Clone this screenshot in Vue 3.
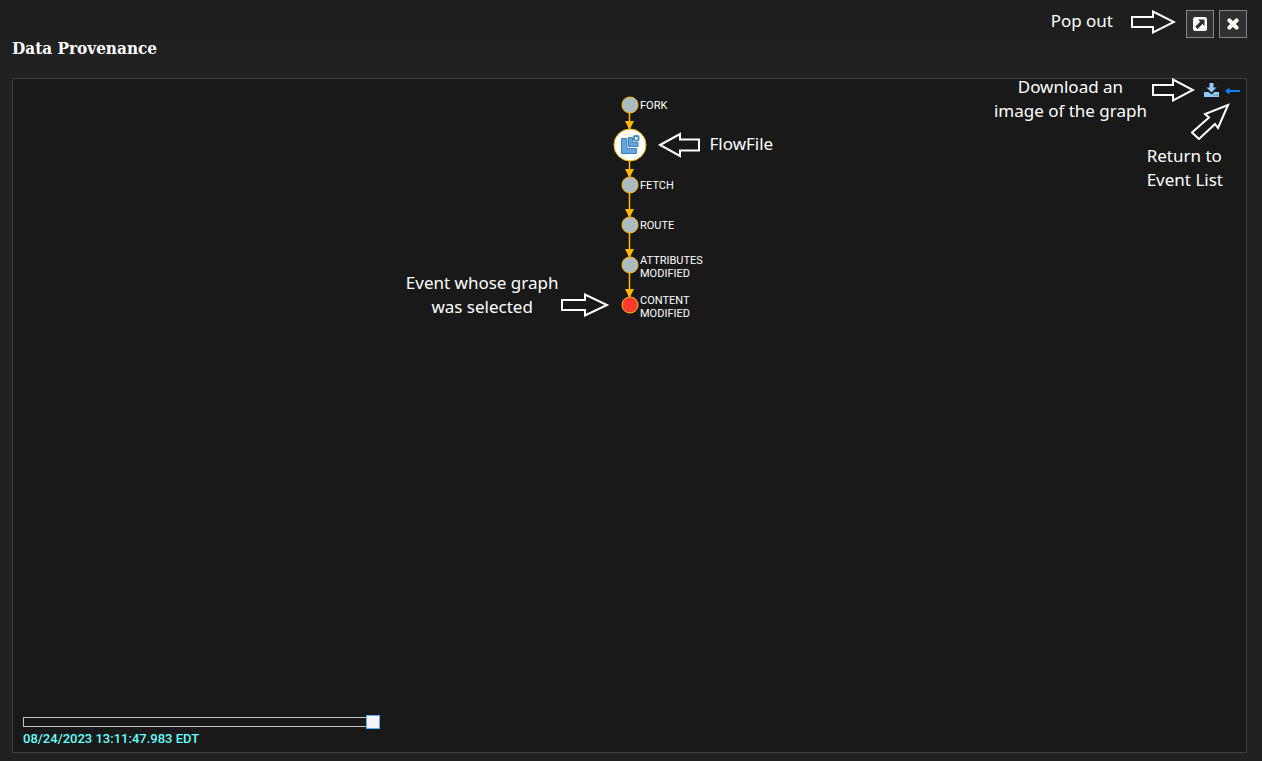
<script setup>
import { ref } from 'vue'

const position = ref(100)

const events = [
  { y: 26, lines: ['FORK'] },
  { y: 66, flowfile: true, lines: [] },
  { y: 106, lines: ['FETCH'] },
  { y: 146, lines: ['ROUTE'] },
  { y: 186, lines: ['ATTRIBUTES', 'MODIFIED'] },
  { y: 226, lines: ['CONTENT', 'MODIFIED'], selected: true }
]

const radius = (e) => (e.flowfile ? 16 : 8)

const links = events.slice(1).map((e, i) => ({
  from: events[i].y + radius(events[i]),
  to: e.y - radius(e)
}))

const baseline = (e, i) => e.y + 4 + (e.lines.length > 1 ? i * 13 - 5 : 0)
</script>

<template>
  <main class="page">
    <header class="topbar">
      <span class="note">Pop out</span>
      <svg class="arrow" width="45" height="24" viewBox="0 0 45 24" aria-hidden="true">
        <path d="M1 7H22V1.500L43 12 22 22.500V17H1Z" />
      </svg>
      <div class="window-buttons">
        <button type="button" class="square" aria-label="Pop out">
          <svg width="14" height="14" viewBox="0 0 14 14">
            <rect width="14" height="14" rx="2.500" fill="#fff" />
            <path d="M5 2.500H11.500V9L9.500 7 4.500 12 2.200 9.700 7.200 4.700Z" fill="#303030" />
          </svg>
        </button>
        <button type="button" class="square" aria-label="Close">
          <svg width="12" height="12" viewBox="0 0 12 12">
            <path d="M2.400 2.400 9.600 9.600M9.600 2.400 2.400 9.600" stroke="#fff" stroke-width="4" stroke-linecap="round" />
          </svg>
        </button>
      </div>
    </header>

    <h1>Data Provenance</h1>

    <section class="panel" aria-label="Provenance graph">
      <svg class="graph" width="240" height="250" viewBox="0 0 240 250">
        <g v-for="(l, i) in links" :key="'l' + i">
          <line x1="119.500" x2="119.500" :y1="l.from" :y2="l.to" class="link" />
          <path :d="`M115 ${l.to - 8}H124L119.500 ${l.to + 1}Z`" fill="#ffb800" />
        </g>
        <g v-for="e in events" :key="e.y">
          <circle cx="120" :cy="e.y" :r="radius(e)" class="node" :class="{ flowfile: e.flowfile, selected: e.selected }" />
          <g v-if="e.flowfile" class="file-icon">
            <path d="M111.500 59.500H117V69.500H126.500V74.500H111.500Z" />
            <path d="M118.500 58.500H122.500V63.500H128V67.500H118.500Z" />
            <rect x="124" y="57" width="4.500" height="4.500" rx="1" class="ring" />
          </g>
          <text v-for="(t, i) in e.lines" :key="i" x="130" :y="baseline(e, i)">{{ t }}</text>
        </g>
      </svg>

      <div class="tools">
        <button type="button" aria-label="Download image">
          <svg width="15" height="14" viewBox="0 0 15 14" fill="#8fc9ff">
            <path d="M5.500 0H9.500V4.500H12.500L7.500 9.500 2.500 4.500H5.500Z" />
            <path fill-rule="evenodd" d="M0 9H4.500L7.500 11.500 10.500 9H15V14H0ZM10 11.800V12.500H11V11.800ZM12.500 11.800V12.500H13.500V11.800Z" />
          </svg>
        </button>
        <button type="button" aria-label="Return to event list">
          <svg width="15" height="14" viewBox="0 0 15 14" fill="#0a84ff">
            <path d="M0 8 4.500 4.500V7H15V9H4.500V11.500Z" />
          </svg>
        </button>
      </div>

      <div class="note flowfile-note">
        <svg class="arrow" width="43" height="26" viewBox="0 0 43 26" aria-hidden="true">
          <path d="M2 13 22 2V7.500H41V18.500H22V24Z" />
        </svg>
        <span>FlowFile</span>
      </div>

      <div class="note event-note">
        <span>Event whose graph<br />was selected</span>
        <svg class="arrow" width="49" height="24" viewBox="0 0 49 24" aria-hidden="true">
          <path d="M1 7H24V1.500L46 12 24 22.500V17H1Z" />
        </svg>
      </div>

      <div class="note download-note">
        <span>Download an<br />image of the graph</span>
        <svg class="arrow" width="43" height="24" viewBox="0 0 43 24" aria-hidden="true">
          <path d="M1 7H21V1.500L41 12 21 22.500V17H1Z" />
        </svg>
      </div>

      <div class="note return-note">
        <svg class="arrow" width="40" height="38" viewBox="0 0 40 38" aria-hidden="true">
          <path d="M37 3 14 12 18 15.500 1 30.500 8 37 24 22 27 26Z" />
        </svg>
        <span>Return to<br />Event List</span>
      </div>

      <div class="timeline">
        <input id="time" v-model="position" type="range" min="0" max="100" />
        <label for="time">08/24/2023 13:11:47.983 EDT</label>
      </div>
    </section>
  </main>
</template>

<style>
body {
  background: #212121;
}
</style>

<style scoped>
* {
  box-sizing: border-box;
}
.page {
  display: flex;
  flex-direction: column;
  min-height: 100vh;
  padding: 0 15px 8px 12px;
  background: linear-gradient(#1e1e1e 38px, #212121 38px);
  color: #fff;
  font-family: Roboto, sans-serif;
}
.topbar {
  display: flex;
  justify-content: flex-end;
  align-items: center;
  height: 38px;
  padding-top: 8px;
}
.topbar .note {
  margin-right: 18px;
  padding-bottom: 4px;
}
.topbar .arrow {
  margin: 0 10px 2px 0;
}
.window-buttons {
  display: flex;
  gap: 5px;
  padding-top: 2px;
}
button {
  display: flex;
  align-items: center;
  justify-content: center;
  padding: 0;
  border: 0;
  background: none;
}
.square {
  width: 28px;
  height: 28px;
  border: 1px solid #7b8790;
  background: #303030;
}
h1 {
  margin: 0 0 20px;
  font: bold 17px/20px "Roboto Slab", "DejaVu Serif Condensed", "DejaVu Serif", serif;
}
.panel {
  position: relative;
  flex: 1;
  display: flex;
  flex-direction: column;
  border: 1px solid #404040;
  background: #191919;
}
.graph {
  display: block;
  margin: 0 auto;
}
.graph text {
  fill: #fff;
  font-size: 11px;
}
.link {
  stroke: #ffb800;
  stroke-width: 1.5;
}
.node {
  fill: #aabbc3;
  stroke: #ffb800;
  stroke-width: 1;
}
.node.selected {
  fill: #ff3b30;
}
.node.flowfile {
  fill: #fff;
}
.file-icon {
  fill: #64a4dc;
  stroke: #4180b9;
  stroke-width: 1;
}
.file-icon .ring {
  fill: #fff;
  stroke: #4b8cc6;
  stroke-width: 2;
}
.tools {
  position: absolute;
  top: 4px;
  right: 6px;
  display: flex;
  gap: 6px;
}
.note {
  font: 17px/24px "Noto Sans", "Open Sans", sans-serif;
  white-space: nowrap;
}
.panel .note {
  position: absolute;
  display: flex;
}
.arrow {
  flex: none;
  fill: none;
  stroke: #fff;
  stroke-width: 2;
}
.flowfile-note {
  top: 53px;
  left: calc(50% + 28px);
  gap: 9px;
}
.event-note {
  top: 192px;
  right: calc(50% + 20px);
  gap: 2px;
  text-align: center;
}
.event-note .arrow {
  margin-top: 22px;
}
.download-note {
  top: -4px;
  right: 51px;
  gap: 5px;
  text-align: center;
}
.download-note .arrow {
  margin-top: 3px;
}
.panel .return-note {
  top: 23px;
  right: 15px;
  flex-direction: column;
  align-items: flex-end;
  gap: 4px;
}
.return-note span {
  margin-right: 8px;
}
.timeline {
  display: flex;
  flex-direction: column;
  align-items: flex-start;
  gap: 1px;
  margin-top: auto;
  padding: 0 10px 4px;
}
.timeline label {
  color: #66ffff;
  font-size: 13px;
  font-weight: 500;
  line-height: 18px;
}
input[type='range'] {
  appearance: none;
  width: 357px;
  max-width: 100%;
  height: 14px;
  margin: 0;
  background: none;
}
input[type='range']::-webkit-slider-runnable-track {
  height: 10px;
  border: 1px solid #c4c4c4;
}
input[type='range']::-webkit-slider-thumb {
  appearance: none;
  position: relative;
  left: 1px;
  width: 14px;
  height: 14px;
  margin-top: -3px;
  border: 1px solid #5aaeff;
  background: #f5f5f5;
}
</style>
